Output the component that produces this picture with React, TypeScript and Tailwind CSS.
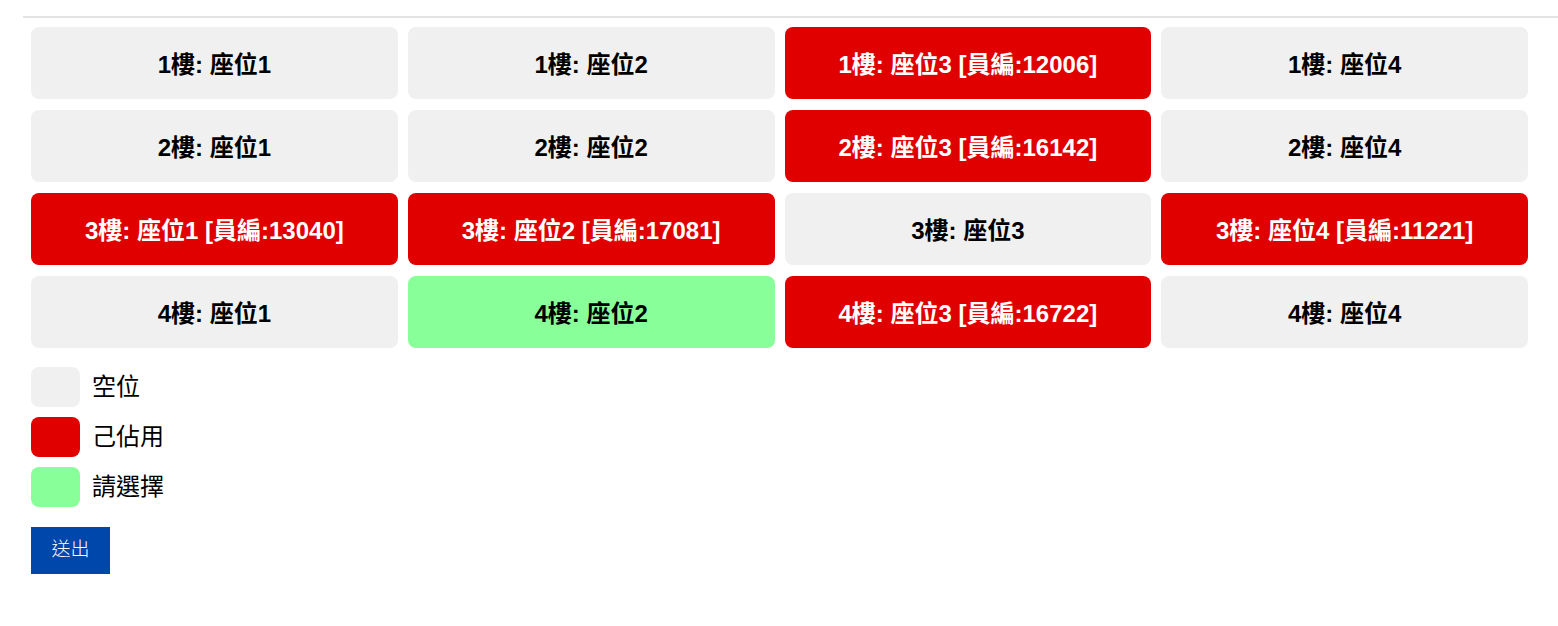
const seats: { label: string; state: "empty" | "taken" | "selected" }[] = [
  { label: "1樓: 座位1", state: "empty" },
  { label: "1樓: 座位2", state: "empty" },
  { label: "1樓: 座位3 [員編:12006]", state: "taken" },
  { label: "1樓: 座位4", state: "empty" },
  { label: "2樓: 座位1", state: "empty" },
  { label: "2樓: 座位2", state: "empty" },
  { label: "2樓: 座位3 [員編:16142]", state: "taken" },
  { label: "2樓: 座位4", state: "empty" },
  { label: "3樓: 座位1 [員編:13040]", state: "taken" },
  { label: "3樓: 座位2 [員編:17081]", state: "taken" },
  { label: "3樓: 座位3", state: "empty" },
  { label: "3樓: 座位4 [員編:11221]", state: "taken" },
  { label: "4樓: 座位1", state: "empty" },
  { label: "4樓: 座位2", state: "selected" },
  { label: "4樓: 座位3 [員編:16722]", state: "taken" },
  { label: "4樓: 座位4", state: "empty" },
];

const stateClass = {
  empty: "bg-[#f0f0f0] text-black",
  taken: "bg-[#e00000] text-white",
  selected: "bg-[#88ff99] text-black",
};

export default function App() {
  return (
    <div className="min-h-[626px] bg-white font-['Liberation_Sans','Noto_Sans_CJK_TC',sans-serif]">
      <div className="pt-4">
        <hr className="ml-[23px] border-0 border-t-2 border-[#e3e3e3]" />
      </div>

      <div className="pl-[31px] pr-[30px] pt-[9px]">
        <div className="grid grid-cols-4 gap-x-[10px] gap-y-[11px]">
          {seats.map((s) => (
            <div
              key={s.label}
              className={`${stateClass[s.state]} h-[72px] pt-[3px] rounded-lg flex items-center justify-center text-[24px] font-bold`}
            >
              {s.label}
            </div>
          ))}
        </div>

        <div className="mt-[19px] space-y-[10px]">
          {[
            { color: "bg-[#f0f0f0]", text: "空位" },
            { color: "bg-[#e00000]", text: "己佔用" },
            { color: "bg-[#88ff99]", text: "請選擇" },
          ].map((l) => (
            <div key={l.text} className="flex items-center gap-3">
              <div className={`${l.color} w-[49px] h-[40px] rounded-lg`} />
              <span className="text-[24px] text-black">{l.text}</span>
            </div>
          ))}
        </div>

        <button className="mt-5 w-[79px] h-[47px] bg-[#0047ab] text-white text-[19px] font-light">
          送出
        </button>
      </div>
    </div>
  );
}
